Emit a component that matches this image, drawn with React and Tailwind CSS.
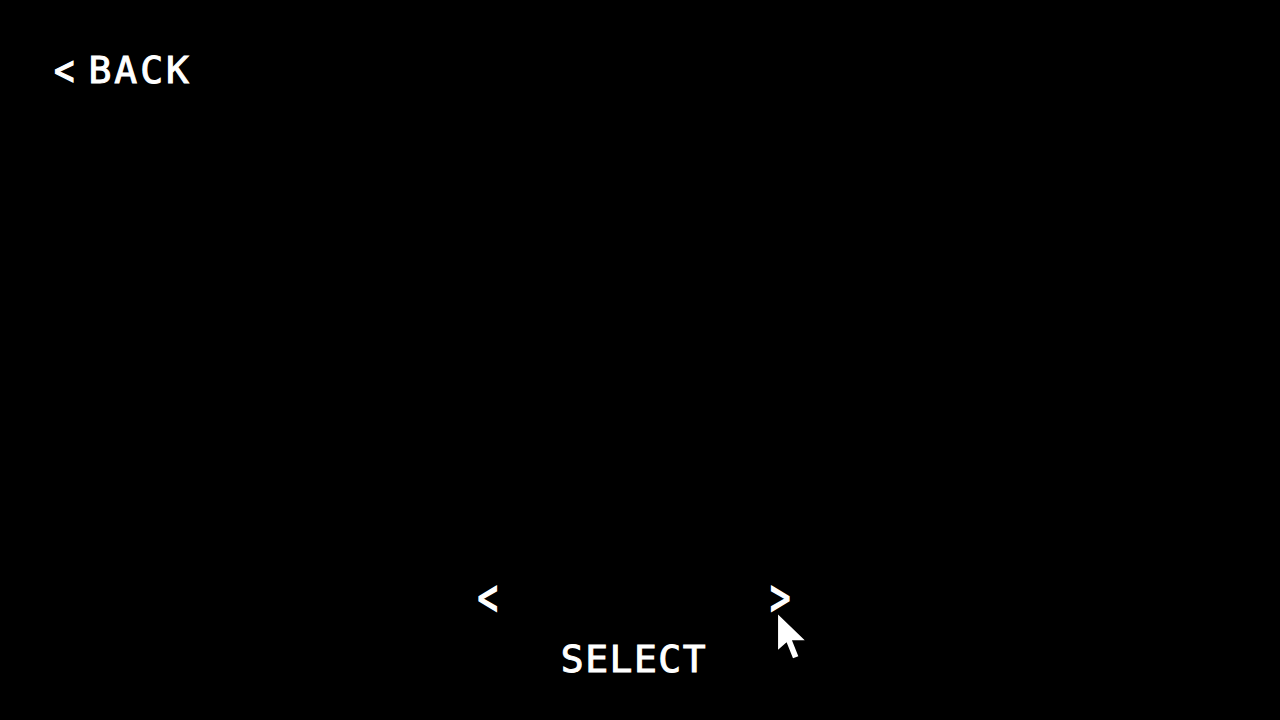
import React from 'react';

const pixelFont = { fontFamily: '"DejaVu Sans Mono", "Liberation Mono", monospace' };

const Cursor = () => (
  <svg width="32" height="50" viewBox="0 0 30 46" className="absolute left-[299px] top-[33px]">
    <path d="M1 1 L1 34 L9 27 L15 42 L20 40 L14 25 L26 25 Z" fill="#fff" />
  </svg>
);

export default function App() {
  return (
    <div
      className="w-[1280px] h-[720px] bg-black text-white flex flex-col select-none [-webkit-text-stroke:1px_white]"
      style={pixelFont}
    >
      <div className="pl-[54px] pt-[51px]">
        <button className="text-[38px] leading-none tracking-[3px] flex items-center gap-[11px]">
          <span className="text-[34px] inline-block scale-y-125">&lt;</span>
          <span>BACK</span>
        </button>
      </div>

      <div className="flex-1" />

      <div className="flex flex-col items-center pb-[42px] ml-[-12px]">
        <div className="relative flex items-center gap-[272px] text-[34px] leading-none">
          <button className="inline-block scale-y-150">&lt;</button>
          <button className="inline-block scale-y-150">&gt;</button>
          <Cursor />
        </div>
        <button className="mt-[26px] text-[38px] leading-none tracking-[1.5px]">SELECT</button>
      </div>
    </div>
  );
}
